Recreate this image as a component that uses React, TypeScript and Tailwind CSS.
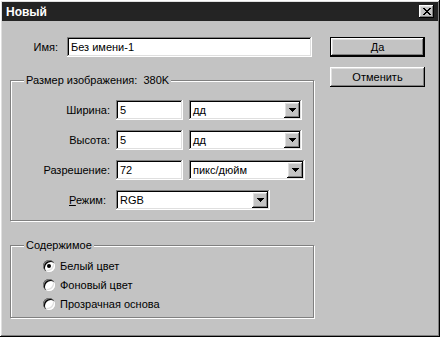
import type { ReactNode } from "react";

const raised =
	"shadow-[inset_-1px_-1px_#000,inset_1px_1px_#fff,inset_-2px_-2px_#808080,inset_2px_2px_#dfdfdf]";
const sunken =
	"shadow-[inset_-1px_-1px_#fff,inset_1px_1px_#808080,inset_-2px_-2px_#dfdfdf,inset_2px_2px_#000]";
const etched = "border border-[#808080] shadow-[inset_1px_1px_#fff,1px_1px_#fff]";

const Arrow = () => (
	<svg width="7" height="4" viewBox="0 0 7 4" shapeRendering="crispEdges">
		<path d="M0 0h7v1h-1v1h-1v1h-1v1h-1v-1h-1v-1h-1v-1h-1z" fill="#000" />
	</svg>
);

const TextBox = ({ value, className }: { value: string; className: string }) => (
	<div className={`flex h-[20px] items-center bg-white pl-[4px] ${sunken} ${className}`}>
		{value}
	</div>
);

const Select = ({ value, className }: { value: string; className: string }) => (
	<div
		className={`flex h-[20px] items-center justify-between bg-white pl-[4px] pr-[2px] ${sunken} ${className}`}
	>
		<span>{value}</span>
		<div className={`flex h-[16px] w-[16px] items-center justify-center bg-[#c3c3c3] ${raised}`}>
			<Arrow />
		</div>
	</div>
);

const Row = ({ label, children }: { label: ReactNode; children: ReactNode }) => (
	<div className="flex h-[20px] items-center">
		<div className="w-[100px] pr-[1px] text-right">{label}</div>
		<div className="ml-[5px] flex items-center">{children}</div>
	</div>
);

const Radio = ({ label, checked }: { label: string; checked?: boolean }) => (
	<div className="flex h-[19px] items-center pl-[32px]">
		<div
			className={`flex h-[12px] w-[12px] items-center justify-center rounded-full bg-white shadow-[inset_1px_1px_#808080,inset_2px_2px_#000,inset_-1px_-1px_#fff,inset_-2px_-2px_#dfdfdf]`}
		>
			{checked && <div className="h-[4px] w-[4px] rounded-full bg-black" />}
		</div>
		<span className="ml-[5px]">{label}</span>
	</div>
);

const App = () => {
	return (
		<div
			className={`flex h-[337px] w-[440px] flex-col bg-[#c3c3c3] p-[2px] font-['Liberation_Sans',Arial,sans-serif] text-[11px] leading-[14px] text-black ${raised}`}
		>
			<div className="flex h-[19px] items-center justify-between bg-[#242424] pl-[4px] pr-[4px]">
				<span className="text-[12px] font-bold text-white">Новый</span>
				<div className={`flex h-[13px] w-[15px] items-center justify-center bg-[#c3c3c3] ${raised}`}>
					<svg width="8" height="7" viewBox="0 0 8 7" shapeRendering="crispEdges">
						<path
							d="M0 0h2v1h1v1h2v-1h1v-1h2v1h-1v1h-1v1h-1v1h1v1h1v1h1v1h-2v-1h-1v-1h-2v1h-1v1h-2v-1h1v-1h1v-1h1v-1h-1v-1h-1v-1h-1z"
							fill="#000"
						/>
					</svg>
				</div>
			</div>

			<div className="flex pt-[16px]">
				<div className="ml-[8px] flex w-[304px] flex-col">
					<div className="flex h-[20px] items-center justify-end pr-[2px]">
						<span>Имя:</span>
						<TextBox value="Без имени-1" className="ml-[9px] w-[245px]" />
					</div>

					<fieldset className={`mt-[16px] pb-[10px] pt-[13px] ${etched}`}>
						<legend className="ml-[13px] bg-[#c3c3c3] px-[2px] leading-[14px]">
							Размер изображения:&nbsp;&nbsp;380K
						</legend>
						<div className="flex flex-col gap-[10px]">
							<Row label="Ширина:">
								<TextBox value="5" className="w-[67px]" />
								<Select value="дд" className="ml-[6px] w-[113px]" />
							</Row>
							<Row label="Высота:">
								<TextBox value="5" className="w-[67px]" />
								<Select value="дд" className="ml-[6px] w-[113px]" />
							</Row>
							<Row label="Разрешение:">
								<TextBox value="72" className="w-[67px]" />
								<Select value="пикс/дюйм" className="ml-[6px] w-[116px]" />
							</Row>
							<Row
								label={
									<span className="pr-[4px]">
										<span className="underline">Р</span>ежим:
									</span>
								}
							>
								<Select value="RGB" className="w-[154px]" />
							</Row>
						</div>
					</fieldset>

					<fieldset className={`mt-[17px] pb-[4px] pt-[4px] ${etched}`}>
						<legend className="ml-[13px] bg-[#c3c3c3] px-[2px] leading-[14px]">Содержимое</legend>
						<Radio label="Белый цвет" checked />
						<Radio label="Фоновый цвет" />
						<Radio label="Прозрачная основа" />
					</fieldset>
				</div>

				<div className="ml-[16px] flex w-[95px] flex-col">
					<button
						className={`flex h-[20px] items-center justify-center border border-black bg-[#c3c3c3] ${raised}`}
					>
						Да
					</button>
					<button className={`mt-[10px] flex h-[20px] items-center justify-center bg-[#c3c3c3] ${raised}`}>
						Отменить
					</button>
				</div>
			</div>
		</div>
	);
};

export default App;
